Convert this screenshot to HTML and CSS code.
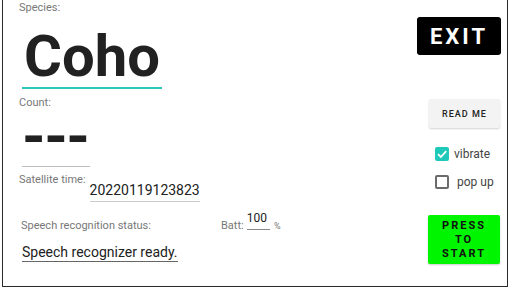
FILE: index.html
```html
<!DOCTYPE html>
<html>
<head>
<meta charset="utf-8">
<link rel="stylesheet" href="styles.css">
</head>
<body>
<div class="frame">
  <div class="left">
    <div class="label">Species:</div>
    <div class="coho">Coho</div>
    <div class="label count-label">Count:</div>
    <div class="dashes">---</div>
    <div class="sat-row">
      <div class="label">Satellite time:</div>
      <div class="sat-value">20220119123823</div>
    </div>
    <div class="status-row">
      <div class="label status-label">Speech recognition status:</div>
      <div class="label">Batt:</div>
      <div class="batt-value">100</div>
      <div class="pct">%</div>
    </div>
    <div class="status-value">Speech recognizer ready.</div>
  </div>
  <div class="right">
    <div class="exit">EXIT</div>
    <div class="readme">READ ME</div>
    <div class="check-row vibrate">
      <span class="box checked"><svg viewBox="0 0 14 14" width="14" height="14"><path d="M3 7.2 L5.9 10 L11.2 4.2" fill="none" stroke="#fff" stroke-width="1.8"/></svg></span>
      <span class="check-text">vibrate</span>
    </div>
    <div class="check-row popup">
      <span class="box"></span>
      <span class="check-text popup-text">pop up</span>
    </div>
    <div class="start">PRESS<br>TO<br>START</div>
  </div>
</div>
</body>
</html>
```

FILE: styles.css
```css
html, body {
  margin: 0;
  padding: 0;
  background: #fff;
  font-family: Roboto, "Noto Sans", sans-serif;
}
.frame {
  margin-left: 2px;
  width: 506px;
  height: 287px;
  box-sizing: border-box;
  border: 1px solid #2a2a2a;
  border-top: none;
  display: flex;
  overflow: hidden;
}
.left {
  flex: 1;
  display: flex;
  flex-direction: column;
  align-items: flex-start;
  padding: 2px 0 0 16px;
}
.label {
  font-size: 11px;
  line-height: 12px;
  color: #777;
  white-space: nowrap;
}
.coho {
  margin: 13px 0 0 3px;
  padding: 0 2px 2px 2px;
  font-size: 58px;
  line-height: 58px;
  font-weight: 700;
  color: #212121;
  border-bottom: 2px solid #2ac7b6;
}
.count-label {
  margin-top: 8px;
}
.dashes {
  margin-left: 3px;
  padding: 0 2px 1px 0;
  font-size: 60px;
  line-height: 56px;
  font-weight: 700;
  letter-spacing: -1.5px;
  color: #212121;
  border-bottom: 1px solid #bbb;
}
.sat-row {
  display: flex;
  align-items: flex-start;
  margin-top: 7px;
  gap: 4px;
}
.sat-value {
  margin-top: 7px;
  font-size: 14px;
  line-height: 18px;
  padding-bottom: 2px;
  color: #212121;
  border-bottom: 1px solid #ccc;
}
.status-row {
  display: flex;
  align-items: flex-end;
  margin-top: 9px;
}
.status-label {
  width: 200px;
  margin-left: 2px;
}
.batt-value {
  margin: 0 0 2px 3px;
  padding: 0 3px 4px 0;
  font-size: 12px;
  line-height: 14px;
  color: #212121;
  border-bottom: 1px solid #888;
}
.pct {
  margin-left: 4px;
  font-size: 9px;
  line-height: 11px;
  color: #777;
}
.status-value {
  margin: 12px 0 0 3px;
  font-size: 14px;
  line-height: 16px;
  padding-bottom: 1px;
  color: #212121;
  border-bottom: 1px solid #666;
}
.right {
  width: 84px;
  margin-right: 6px;
  padding-top: 17px;
  display: flex;
  flex-direction: column;
  align-items: flex-start;
}
.exit {
  width: 84px;
  height: 38px;
  background: #000;
  border-radius: 3px;
  color: #fff;
  font-size: 22px;
  font-weight: 700;
  letter-spacing: 3px;
  display: flex;
  align-items: center;
  justify-content: center;
  box-sizing: border-box;
}
.readme {
  margin: 44px 0 0 12px;
  width: 71px;
  height: 29px;
  background: #f3f3f3;
  border-radius: 2px;
  box-shadow: 0 1px 2px rgba(0,0,0,0.18);
  font-size: 9px;
  font-weight: 500;
  letter-spacing: 1px;
  color: #222;
  display: flex;
  align-items: center;
  justify-content: center;
}
.check-row {
  display: flex;
  align-items: center;
  margin-left: 18px;
  height: 14px;
}
.vibrate {
  margin-top: 19px;
}
.popup {
  margin-top: 14px;
}
.box {
  width: 14px;
  height: 14px;
  box-sizing: border-box;
  border: 2px solid #6b6b6b;
  border-radius: 2px;
  display: block;
}
.box.checked {
  border: none;
  background: #1fc9b9;
}
.box svg {
  display: block;
}
.check-text {
  margin-left: 5px;
  font-size: 12px;
  line-height: 14px;
  color: #444;
}
.popup-text {
  margin-left: 8px;
}
.start {
  margin: 26px 0 0 11px;
  width: 72px;
  height: 49px;
  background: #00f500;
  border-radius: 2px;
  box-shadow: 0 1px 2px rgba(0,0,0,0.2);
  font-size: 11px;
  line-height: 14px;
  font-weight: 700;
  letter-spacing: 2px;
  color: #111;
  text-align: center;
  padding-top: 4px;
  box-sizing: border-box;
}
```
